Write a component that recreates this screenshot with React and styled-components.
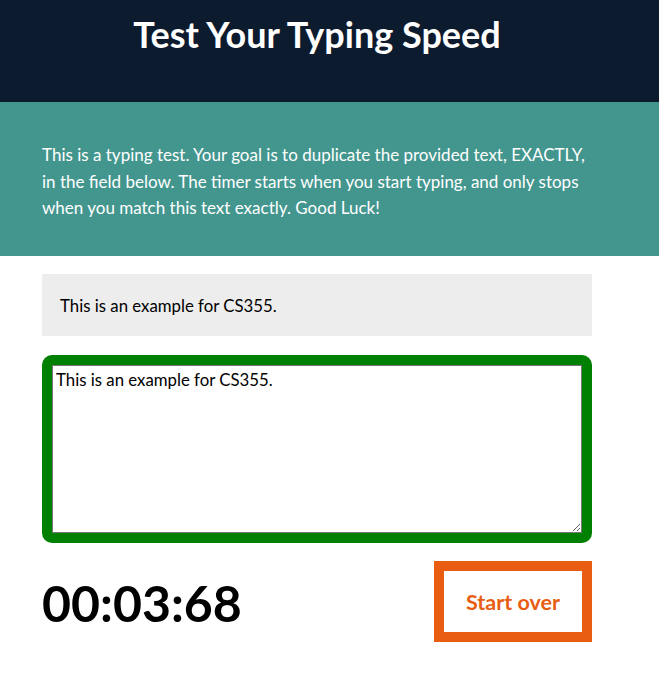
import React, { useState } from "react";
import styled, { createGlobalStyle } from "styled-components";

const GlobalStyle = createGlobalStyle`
  html, body { margin: 0; padding: 0; background: #ffffff; }
  body { font-family: "Lato", "Open Sans", sans-serif; color: #000; }
`;

const Header = styled.header`
  background: #0d1b2e;
  height: 102px;
`;

const Container = styled.div`
  width: 550px;
  margin-left: 42px;
`;

const Title = styled.h1`
  margin: 0;
  padding-top: 13px;
  text-align: center;
  color: #ffffff;
  font-size: 36px;
  font-weight: 700;
  line-height: 42px;
`;

const Intro = styled.section`
  background: #43968e;
  height: 154px;
  box-sizing: border-box;
  padding-top: 40px;
`;

const IntroText = styled.p`
  margin: 0;
  color: #ffffff;
  font-size: 17px;
  line-height: 26.5px;
`;

const Main = styled(Container)`
  padding-top: 18px;
`;

const Sample = styled.div`
  background: #ededed;
  height: 62px;
  box-sizing: border-box;
  padding: 0 18px;
  display: flex;
  align-items: center;
  font-size: 16.8px;
`;

const Field = styled.div`
  margin-top: 19px;
  border: 10px solid #008000;
  border-radius: 10px;
  height: 188px;
  box-sizing: border-box;
  display: flex;
`;

const TextArea = styled.textarea`
  flex: 1;
  margin: 0;
  border: 1px solid #767676;
  padding: 3px 3px;
  font-family: "Lato", "Open Sans", sans-serif;
  font-size: 16.8px;
  line-height: 22px;
  color: #000;
  resize: both;
  outline: none;
`;

const Footer = styled.div`
  margin-top: 18px;
  display: flex;
  justify-content: space-between;
  align-items: center;
`;

const Timer = styled.div`
  font-size: 50px;
  font-weight: 700;
  line-height: 60px;
  margin-top: 2px;
`;

const Button = styled.button`
  width: 158px;
  height: 81px;
  box-sizing: border-box;
  border: 10px solid #e85d12;
  background: #ffffff;
  color: #e85d12;
  font-family: "Lato", "Open Sans", sans-serif;
  font-size: 21.5px;
  font-weight: 700;
  cursor: pointer;
  padding: 0;
`;

export default function App() {
  const sample = "This is an example for CS355.";
  const [value, setValue] = useState(sample);
  return (
    <>
      <GlobalStyle />
      <Header>
        <Container>
          <Title>Test Your Typing Speed</Title>
        </Container>
      </Header>
      <Intro>
        <Container>
          <IntroText>
            This is a typing test. Your goal is to duplicate the provided text, EXACTLY,
            in the field below. The timer starts when you start typing, and only stops
            when you match this text exactly. Good Luck!
          </IntroText>
        </Container>
      </Intro>
      <Main>
        <Sample>{sample}</Sample>
        <Field>
          <TextArea value={value} onChange={(e) => setValue(e.target.value)} />
        </Field>
        <Footer>
          <Timer>00:03:68</Timer>
          <Button>Start over</Button>
        </Footer>
      </Main>
    </>
  );
}
